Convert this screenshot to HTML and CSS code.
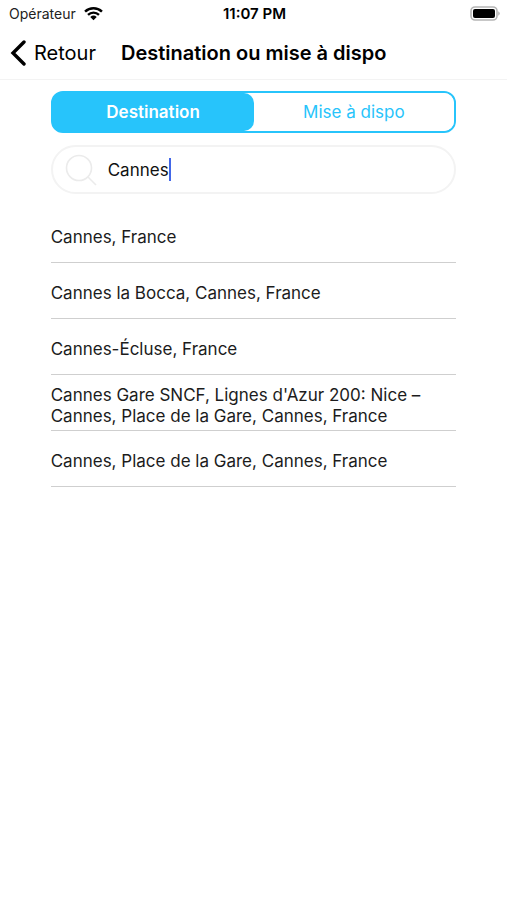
FILE: index.html
```html
<!DOCTYPE html>
<html lang="fr">
<head>
<meta charset="utf-8">
<meta name="viewport" content="width=device-width, initial-scale=1">
<title>Destination ou mise à dispo</title>
<link rel="stylesheet" href="styles.css">
</head>
<body>
<div class="status">
  <div class="carrier">
    <span>Opérateur</span>
    <svg class="wifi" viewBox="0 0 18 14" aria-hidden="true">
      <path d="M1 5.2a11.6 11.6 0 0 1 16 0M3.8 8.2a7.6 7.6 0 0 1 10.4 0" fill="none" stroke="#000" stroke-width="2.3"/>
      <path d="M5.9 10.3a4.6 4.6 0 0 1 6.2 0L9 13.5z"/>
    </svg>
  </div>
  <time class="clock">11:07 PM</time>
  <svg class="battery" viewBox="0 0 31 15" aria-label="Batterie" role="img">
    <rect x="2" y="1" width="26" height="13" rx="4" fill="#fff" stroke="#b5b5b5" stroke-width="1.6"/>
    <rect x="4" y="3" width="22" height="9" rx="2"/>
    <path d="M29.2 5.2q1.600.8 1.600 2.300t-1.600 2.300z" fill="#b5b5b5"/>
  </svg>
</div>
<header class="nav">
  <a class="back" href="#">
    <svg class="chevron" viewBox="0 0 16 26" aria-hidden="true"><path d="M14 2 3 13l11 11" fill="none" stroke="#000" stroke-width="3.4" stroke-linecap="round"/></svg>
    <span>Retour</span>
  </a>
  <h1 class="title">Destination ou mise à dispo</h1>
</header>
<main class="content">
  <div class="segments">
    <button class="segment selected" type="button" aria-pressed="true">Destination</button>
    <button class="segment" type="button" aria-pressed="false">Mise à dispo</button>
  </div>
  <label class="search">
    <svg class="magnifier" viewBox="0 0 32 32" aria-label="Rechercher" role="img"><path d="M23 23l8 8M26.500 14a12.500 12.500 0 1 1-25 0 12.500 12.500 0 0 1 25 0z" fill="none" stroke="#ebebeb" stroke-width="1.6"/></svg>
    <input class="query" type="text" value="Cannes" autocomplete="off">
    <span class="caret"></span>
  </label>
  <ul class="results">
    <li class="result">Cannes, France</li>
    <li class="result">Cannes la Bocca, Cannes, France</li>
    <li class="result">Cannes-Écluse, France</li>
    <li class="result">Cannes Gare SNCF, Lignes d'Azur 200: Nice – Cannes, Place de la Gare, Cannes, France</li>
    <li class="result">Cannes, Place de la Gare, Cannes, France</li>
  </ul>
</main>
</body>
</html>
```
FILE: styles.css
```css
* {
  box-sizing: border-box;
}

body {
  margin: 0;
  background: #fff;
  color: #000;
  font-family: Inter, "Liberation Sans", sans-serif;
}

.status {
  display: grid;
  grid-template-columns: 1fr auto 1fr;
  align-items: center;
  height: 27px;
  padding: 0 7px 0 9px;
  font-size: 14px;
}

.carrier {
  display: flex;
  align-items: center;
  gap: 8px;
  color: #222;
}

.wifi {
  width: 19px;
  height: 15px;
}

.clock {
  font-size: 15px;
  font-weight: 600;
}

.battery {
  justify-self: end;
  width: 31px;
  height: 15px;
}

.nav {
  display: flex;
  align-items: center;
  gap: 25px;
  height: 53px;
  padding: 0 10px;
  border-bottom: 1px solid #f3f3f3;
  font-size: 20px;
}

.back {
  display: flex;
  align-items: center;
  gap: 8px;
  color: #000;
  text-decoration: none;
}

.chevron {
  width: 16px;
  height: 26px;
}

.title {
  margin: 0;
  font-size: 20px;
  font-weight: 600;
}

.content {
  padding: 11px 10% 0;
}

.segments {
  display: flex;
  height: 42px;
  border: 2px solid #27c4fb;
  border-radius: 12px;
  background: linear-gradient(90deg, #27c4fb 24px, #fff 24px);
}

.segment {
  flex: 1;
  padding: 0;
  border: 0;
  border-radius: 10px;
  background: #fff;
  color: #27c4fb;
  font: inherit;
  font-size: 17px;
}

.segment.selected {
  background: #27c4fb;
  color: #fff;
  font-weight: 600;
}

.search {
  display: flex;
  align-items: center;
  height: 49px;
  margin-top: 12px;
  padding: 0 12px;
  border: 2px solid #f3f3f3;
  border-radius: 25px;
}

.magnifier {
  width: 32px;
  height: 32px;
  margin-right: 11px;
}

.query {
  field-sizing: content;
  padding: 0;
  border: 0;
  outline: 0;
  background: none;
  color: #111;
  font: inherit;
  font-size: 17px;
}

.caret {
  width: 2px;
  height: 23px;
  background: #4267e8;
}

.results {
  margin: 13px 0 0;
  padding: 0;
  list-style: none;
}

.result {
  display: flex;
  align-items: center;
  min-height: 56px;
  padding-top: 6px;
  border-bottom: 1px solid #cfcfcf;
  color: #1c1c1c;
  font-size: 17px;
  line-height: 21px;
}
```
